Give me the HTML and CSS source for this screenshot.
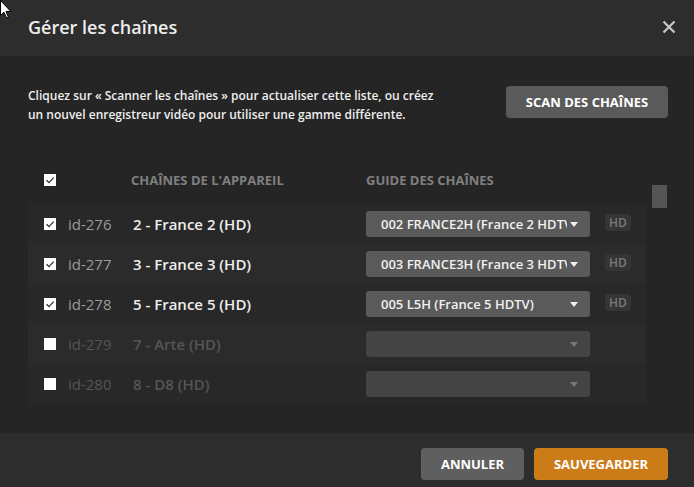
FILE: index.html
```html
<!DOCTYPE html>
<html lang="fr">
<head>
<meta charset="utf-8">
<title>Gérer les chaînes</title>
<link rel="stylesheet" href="styles.css">
</head>
<body>
<div class="modal">
  <header class="modal-header">
    <h1 class="modal-title">Gérer les chaînes</h1>
    <button class="close-btn" aria-label="Fermer">
      <svg width="14" height="14" viewBox="0 0 14 14"><path d="M1.5 1.5 L12.5 12.5 M12.5 1.5 L1.5 12.5" stroke="#c8c8c8" stroke-width="2.2" fill="none"/></svg>
    </button>
  </header>

  <section class="modal-body">
    <div class="intro">
      <p class="intro-text">Cliquez sur « Scanner les chaînes » pour actualiser cette liste, ou créez<br>un nouvel enregistreur vidéo pour utiliser une gamme différente.</p>
      <button class="btn btn-gray btn-scan">Scan des chaînes</button>
    </div>

    <div class="table-wrap">
      <div class="table">
        <div class="row head-row">
          <span class="cb"><svg viewBox="0 0 12 12"><path d="M2.5 6.2 L5 8.6 L9.6 3.6" stroke="#333" stroke-width="1.3" fill="none"/></svg></span>
          <span></span>
          <span class="th th-name">Chaînes de l'appareil</span>
          <span class="th">Guide des chaînes</span>
          <span></span>
        </div>
        <div class="rows">
          <div class="row">
            <span class="cb"><svg viewBox="0 0 12 12"><path d="M2.5 6.2 L5 8.6 L9.6 3.6" stroke="#333" stroke-width="1.3" fill="none"/></svg></span>
            <span class="cid">id-276</span>
            <span class="cname">2 - France 2 (HD)</span>
            <span class="select"><span class="select-text">002 FRANCE2H (France 2 HDTV)</span><span class="caret"></span></span>
            <span class="badge">HD</span>
          </div>
          <div class="row">
            <span class="cb"><svg viewBox="0 0 12 12"><path d="M2.5 6.2 L5 8.6 L9.6 3.6" stroke="#333" stroke-width="1.3" fill="none"/></svg></span>
            <span class="cid">id-277</span>
            <span class="cname">3 - France 3 (HD)</span>
            <span class="select"><span class="select-text">003 FRANCE3H (France 3 HDTV)</span><span class="caret"></span></span>
            <span class="badge">HD</span>
          </div>
          <div class="row">
            <span class="cb"><svg viewBox="0 0 12 12"><path d="M2.5 6.2 L5 8.6 L9.6 3.6" stroke="#333" stroke-width="1.3" fill="none"/></svg></span>
            <span class="cid">id-278</span>
            <span class="cname">5 - France 5 (HD)</span>
            <span class="select"><span class="select-text">005 L5H (France 5 HDTV)</span><span class="caret"></span></span>
            <span class="badge">HD</span>
          </div>
          <div class="row disabled">
            <span class="cb"></span>
            <span class="cid">id-279</span>
            <span class="cname">7 - Arte (HD)</span>
            <span class="select"><span class="select-text"></span><span class="caret"></span></span>
            <span></span>
          </div>
          <div class="row disabled">
            <span class="cb"></span>
            <span class="cid">id-280</span>
            <span class="cname">8 - D8 (HD)</span>
            <span class="select"><span class="select-text"></span><span class="caret"></span></span>
            <span></span>
          </div>
        </div>
      </div>
      <div class="scrollbar"><div class="thumb"></div></div>
    </div>
  </section>

  <footer class="modal-footer">
    <button class="btn btn-gray btn-cancel">Annuler</button>
    <button class="btn btn-orange">Sauvegarder</button>
  </footer>

  <svg class="cursor" width="12" height="19" viewBox="0 0 12 19"><path d="M0.5 0.5 L0.5 15.5 L4 12.2 L6.4 17.8 L8.4 17 L6 11.4 L10.8 11.4 Z" fill="#fff" stroke="#000" stroke-width="1"/></svg>
</div>
</body>
</html>
```

FILE: styles.css
```css
* { box-sizing: border-box; }

html, body {
  margin: 0;
  padding: 0;
  background: #252525;
}

body {
  width: 694px;
  height: 487px;
  overflow: hidden;
  font-family: "Open Sans", "Noto Sans", "DejaVu Sans", sans-serif;
}

.modal {
  position: relative;
  display: flex;
  flex-direction: column;
  height: 487px;
}

.modal-header {
  height: 56px;
  flex: none;
  background: #2d2d2d;
  display: flex;
  align-items: center;
  justify-content: space-between;
  padding: 0 18px 3px 28px;
}

.modal-title {
  margin: 0;
  font-size: 18px;
  font-weight: 600;
  color: #eeeeee;
  line-height: 24px;
}

.close-btn {
  background: none;
  border: 0;
  padding: 0;
  width: 14px;
  height: 14px;
  display: block;
}
.close-btn svg { display: block; }

.modal-body {
  flex: 1;
  background: #252525;
  padding: 30px 26px 0 28px;
  display: flex;
  flex-direction: column;
}

.intro {
  display: flex;
  justify-content: space-between;
  align-items: flex-start;
}

.intro-text {
  margin: 0;
  font-size: 12px;
  line-height: 19px;
  font-weight: 600;
  color: #eeeeee;
}

.btn {
  font-family: inherit;
  border: 0;
  border-radius: 4px;
  height: 32px;
  padding: 0 20px;
  font-size: 13px;
  font-weight: 700;
  text-transform: uppercase;
  color: #ffffff;
  line-height: 32px;
}

.btn-gray { background: #5a5a5a; }
.btn-scan { width: 162px; padding: 0; }
.btn-cancel { background: #5f5f5f; width: 103px; padding: 0; }
.btn-orange { background: #cc7b19; width: 134px; padding: 0; }

.table-wrap {
  margin-top: 36px;
  display: flex;
  gap: 6px;
}

.table {
  width: 618px;
}

.row {
  display: grid;
  grid-template-columns: 24px 65px 233px 239px 26px;
  align-items: center;
  height: 40px;
  padding-left: 16px;
}

.head-row {
  height: 44px;
  padding-bottom: 5px;
}

.rows .row:nth-child(odd) { background: #282828; }
.rows .row:nth-child(even) { background: #2b2b2b; }

.cb {
  width: 12px;
  height: 12px;
  background: #ffffff;
  display: block;
}
.cb svg { display: block; width: 12px; height: 12px; }

.th {
  font-size: 13px;
  font-weight: 700;
  color: #808080;
  text-transform: uppercase;
}
.th-name { margin-left: -2px; }

.cid {
  font-size: 15px;
  color: #9a9a9a;
}

.cname {
  font-size: 15px;
  font-weight: 600;
  color: #eeeeee;
}

.select {
  position: relative;
  display: flex;
  align-items: center;
  width: 224px;
  height: 26px;
  border-radius: 3px;
  background: #5a5a5a;
  padding: 0 23px 0 15px;
}

.select-text {
  font-size: 13px;
  font-weight: 600;
  color: #f0f0f0;
  white-space: nowrap;
  overflow: hidden;
  flex: 1;
}

.caret {
  position: absolute;
  right: 12px;
  top: 11px;
  width: 0;
  height: 0;
  border-left: 4px solid transparent;
  border-right: 4px solid transparent;
  border-top: 5px solid #f0f0f0;
}

.badge {
  display: block;
  width: 26px;
  height: 17px;
  border-radius: 3px;
  background: #353535;
  color: #7a7a7a;
  font-size: 12px;
  font-weight: 600;
  line-height: 17px;
  text-align: center;
  margin-top: -3px;
}

.row.disabled .cid { color: #555555; }
.row.disabled .cname { color: #555555; }
.row.disabled .select { background: #444444; }
.row.disabled .caret { border-top-color: #777777; }

.scrollbar {
  width: 15px;
  padding-top: 25px;
}
.thumb {
  width: 15px;
  height: 23px;
  background: #555555;
}

.modal-footer {
  flex: none;
  height: 54px;
  background: #2d2d2d;
  display: flex;
  justify-content: flex-end;
  align-items: flex-start;
  gap: 10px;
  padding: 15px 26px 0 0;
}

.cursor {
  position: absolute;
  left: 0;
  top: 0;
}
```
